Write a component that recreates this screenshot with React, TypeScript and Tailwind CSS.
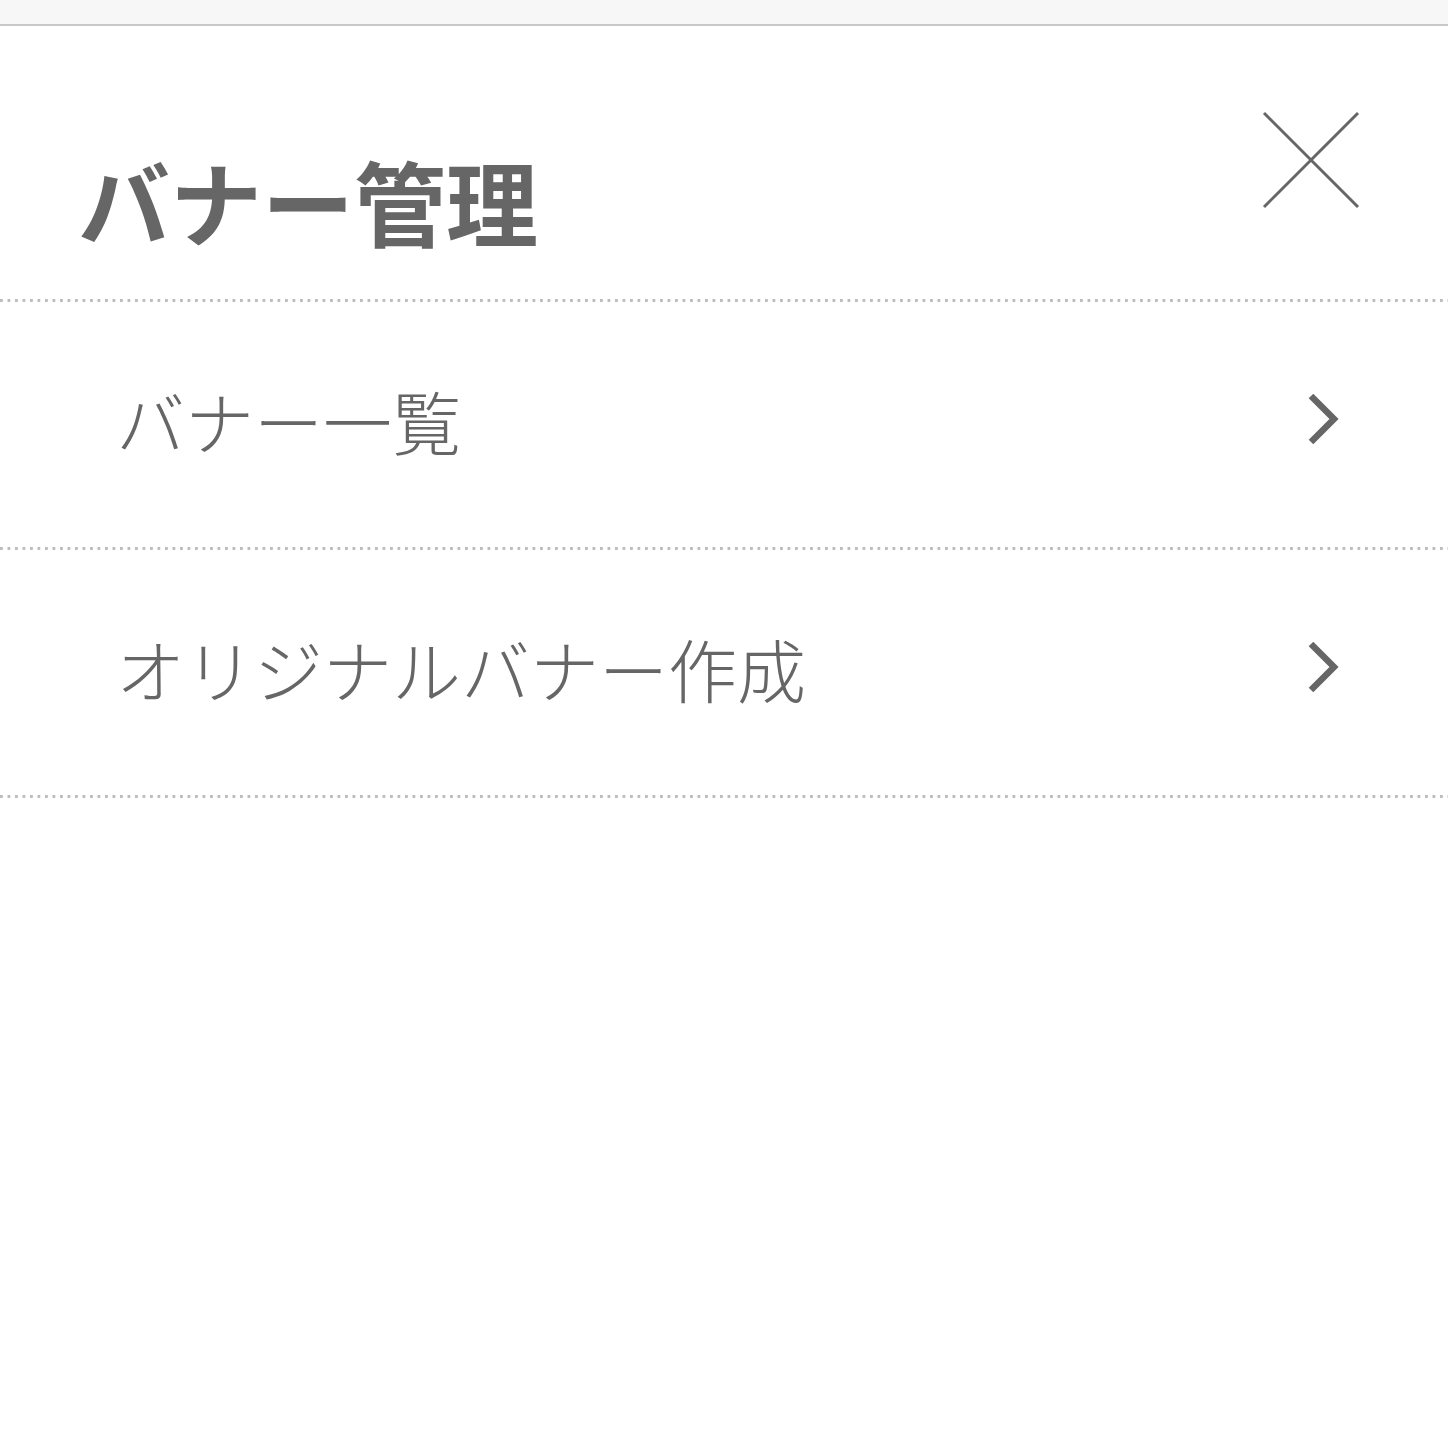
import React from 'react';

const items = ['バナー一覧', 'オリジナルバナー作成'];

function Dotted() {
  return (
    <div className="h-[3px] w-full bg-[linear-gradient(to_right,#bdbdbd_0_3px,transparent_3px_7.5px)] bg-[length:7.5px_3px] bg-repeat-x" />
  );
}

function Chevron() {
  return (
    <svg width="40" height="56" viewBox="0 0 40 56" className="mb-[10px] shrink-0">
      <path d="M7 4 L30 27 L7 50" fill="none" stroke="#666" strokeWidth="6.5" strokeLinecap="butt" />
    </svg>
  );
}

export default function App() {
  return (
    <div className="min-h-[1448px] w-full bg-white text-[#666] font-['Noto_Sans_CJK_JP','Noto_Sans',sans-serif]">
      {/* top bar */}
      <div className="h-[26px] bg-[#f7f7f7] border-b-2 border-[#c8c8c8]" />

      {/* header */}
      <div className="flex h-[273px] items-start justify-between pl-[78px] pr-[88px]">
        <h1 className="mt-[128px] text-[92px] font-bold leading-none">バナー管理</h1>
        <button className="mt-[85px]" aria-label="close">
          <svg width="98" height="98" viewBox="0 0 98 98">
            <path d="M2 2 L96 96 M96 2 L2 96" stroke="#666" strokeWidth="3" fill="none" />
          </svg>
        </button>
      </div>
      <Dotted />

      {items.map((label) => (
        <div key={label}>
          <div className="flex h-[245px] items-center justify-between pl-[116px] pr-[104px]">
            <span className="mb-[8px] text-[69px] font-light leading-none">{label}</span>
            <Chevron />
          </div>
          <Dotted />
        </div>
      ))}
    </div>
  );
}
